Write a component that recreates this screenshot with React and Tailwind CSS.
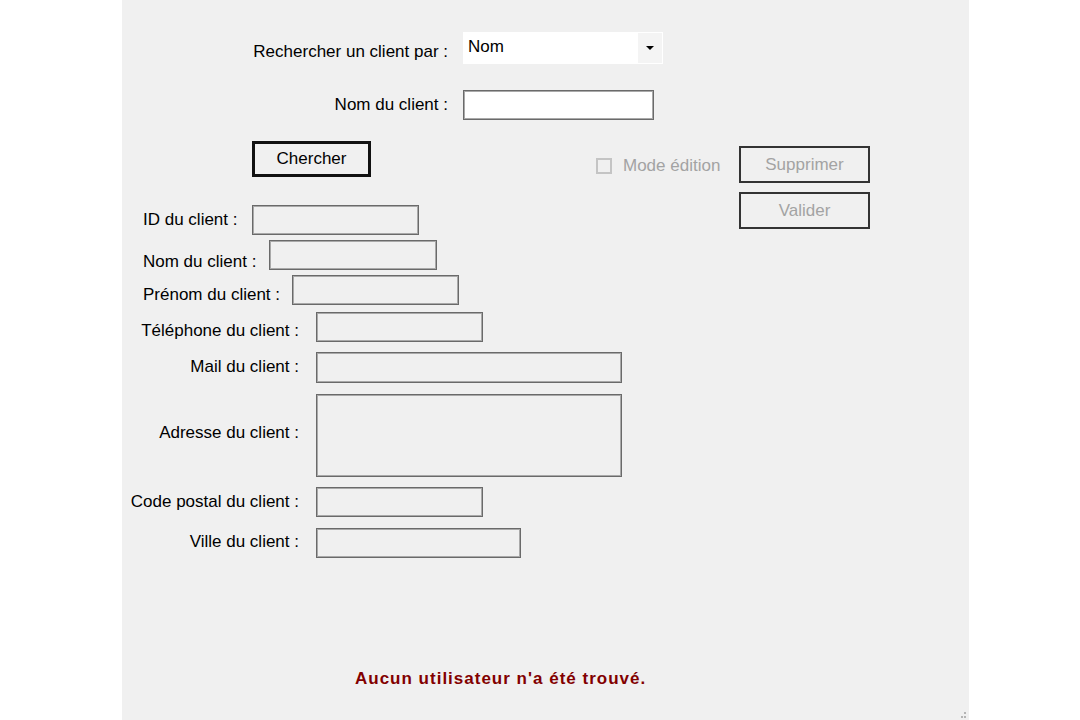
import React from "react";

function LeftRow({ pl, w, mt, label, boxW, boxH = 30, gapTop = 0 }) {
  return (
    <div className="flex items-start" style={{ marginTop: gapTop }}>
      <div
        className="shrink-0 leading-[16px] whitespace-nowrap"
        style={{ width: w, paddingLeft: pl, marginTop: mt }}
      >
        {label}
      </div>
      <div
        className="bg-[#f0f0f0] border border-[#6a6a6a] shadow-[inset_0_0_0_1px_#a9a9a9]"
        style={{ width: boxW, height: boxH }}
      />
    </div>
  );
}

function RightRow({ mt, label, boxW, boxH = 30, gapTop = 0 }) {
  return (
    <div className="flex items-start" style={{ marginTop: gapTop }}>
      <div
        className="shrink-0 w-[194px] pr-[17px] text-right leading-[16px] whitespace-nowrap"
        style={{ marginTop: mt }}
      >
        {label}
      </div>
      <div
        className="bg-[#f0f0f0] border border-[#6a6a6a] shadow-[inset_0_0_0_1px_#a9a9a9]"
        style={{ width: boxW, height: boxH }}
      />
    </div>
  );
}

export default function App() {
  return (
    <div className="w-[1080px] h-[720px] bg-white flex font-['Liberation_Sans',Arial,sans-serif] text-[17px] text-black">
      <div className="ml-[122px] w-[847px] h-[720px] bg-[#f0f0f0] relative flex flex-col">
        {/* Search by */}
        <div className="mt-[32px] flex items-start h-[32px]">
          <div className="w-[326px] mt-[10px] leading-[20px] text-right whitespace-nowrap">Rechercher un client par :</div>
          <div className="ml-[15px] w-[200px] h-[32px] bg-white flex items-center">
            <span className="pl-[5px] mb-[2px]">Nom</span>
            <div className="ml-auto mr-[1px] w-[24px] h-[30px] bg-[#f4f4f4] flex items-center justify-center">
              <div className="w-0 h-0 border-l-[4px] border-r-[4px] border-t-[4px] border-l-transparent border-r-transparent border-t-black" />
            </div>
          </div>
        </div>

        {/* Nom du client */}
        <div className="mt-[26px] flex items-center h-[30px]">
          <div className="w-[326px] text-right whitespace-nowrap">Nom du client :</div>
          <div className="ml-[15px] w-[191px] h-[30px] bg-white border border-[#6a6a6a] shadow-[inset_0_0_0_1px_#a9a9a9]" />
        </div>

        {/* Main area */}
        <div className="mt-[21px] flex items-start">
          <div className="w-[617px] flex flex-col">
            <div className="flex items-start">
              <button className="ml-[130px] w-[119px] h-[36px] border-[3px] border-[#111] bg-[#f0f0f0] flex items-center justify-center">
                Chercher
              </button>
              <div className="ml-[225px] mt-[15px] flex items-center">
                <div className="w-[16px] h-[16px] border-2 border-[#c4c4c4] bg-[#f0f0f0]" />
                <span className="ml-[11px] text-[#a3a3a3] leading-[20px] whitespace-nowrap">Mode édition</span>
              </div>
            </div>

            <div className="mt-[28px] flex flex-col">
              <LeftRow pl={21} w={130} mt={7} label="ID du client :" boxW={167} />
              <LeftRow pl={21} w={147} mt={14} label="Nom du client :" boxW={168} gapTop={5} />
              <LeftRow pl={21} w={170} mt={12} label="Prénom du client :" boxW={167} gapTop={5} />
              <RightRow mt={11} label="Téléphone du client :" boxW={167} gapTop={7} />
              <RightRow mt={7} label="Mail du client :" boxW={306} boxH={31} gapTop={10} />
              <RightRow mt={31} label="Adresse du client :" boxW={306} boxH={83} gapTop={11} />
              <RightRow mt={7} label="Code postal du client :" boxW={167} gapTop={10} />
              <RightRow mt={6} label="Ville du client :" boxW={205} gapTop={11} />
            </div>
          </div>

          <div className="mt-[5px] flex flex-col">
            <button className="w-[131px] h-[37px] border-2 border-[#333] bg-[#f0f0f0] text-[#a3a3a3] flex items-center justify-center">
              Supprimer
            </button>
            <button className="mt-[9px] w-[131px] h-[37px] border-2 border-[#333] bg-[#f0f0f0] text-[#a3a3a3] flex items-center justify-center">
              Valider
            </button>
          </div>
        </div>

        {/* Message */}
        <div className="mt-auto mb-[31px] flex">
          <div className="ml-[233px] font-bold text-[17px] tracking-[1px] text-[#820000] leading-[20px] whitespace-nowrap">
            Aucun utilisateur n'a été trouvé.
          </div>
        </div>

        {/* Resize grip */}
        <svg className="absolute right-[1px] bottom-0" width="10" height="10" viewBox="0 0 10 10">
          <rect x="6" y="2" width="2" height="2" fill="#b4b4b4" />
          <rect x="3" y="6" width="2" height="2" fill="#b4b4b4" />
          <rect x="6" y="6" width="2" height="2" fill="#b4b4b4" />
        </svg>
      </div>
    </div>
  );
}
